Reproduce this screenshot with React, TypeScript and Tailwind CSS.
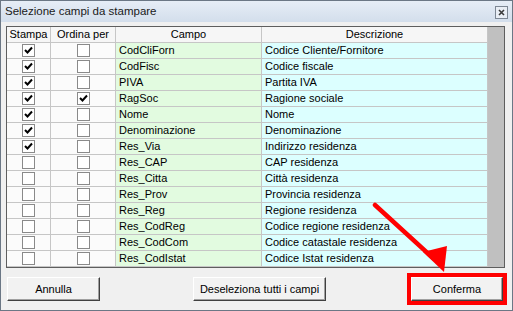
import { Fragment } from 'react';

type Row = { stampa: boolean; ordina: boolean; campo: string; descr: string };

const rows: Row[] = [
  { stampa: true, ordina: false, campo: 'CodCliForn', descr: 'Codice Cliente/Fornitore' },
  { stampa: true, ordina: false, campo: 'CodFisc', descr: 'Codice fiscale' },
  { stampa: true, ordina: false, campo: 'PIVA', descr: 'Partita IVA' },
  { stampa: true, ordina: true, campo: 'RagSoc', descr: 'Ragione sociale' },
  { stampa: true, ordina: false, campo: 'Nome', descr: 'Nome' },
  { stampa: true, ordina: false, campo: 'Denominazione', descr: 'Denominazione' },
  { stampa: true, ordina: false, campo: 'Res_Via', descr: 'Indirizzo residenza' },
  { stampa: false, ordina: false, campo: 'Res_CAP', descr: 'CAP residenza' },
  { stampa: false, ordina: false, campo: 'Res_Citta', descr: 'Città residenza' },
  { stampa: false, ordina: false, campo: 'Res_Prov', descr: 'Provincia residenza' },
  { stampa: false, ordina: false, campo: 'Res_Reg', descr: 'Regione residenza' },
  { stampa: false, ordina: false, campo: 'Res_CodReg', descr: 'Codice regione residenza' },
  { stampa: false, ordina: false, campo: 'Res_CodCom', descr: 'Codice catastale residenza' },
  { stampa: false, ordina: false, campo: 'Res_CodIstat', descr: 'Codice Istat residenza' },
];

const CheckBox = ({ checked }: { checked: boolean }) => (
  <div className="w-[13px] h-[13px] border border-[#8a8a8a] bg-white flex items-center justify-center">
    {checked && (
      <svg width="9" height="9" viewBox="0 0 9 9">
        <path d="M1 4 L3.5 6.5 L8 1.5" stroke="#000" strokeWidth="2" fill="none" />
      </svg>
    )}
  </div>
);

const WinButton = ({ label, className }: { label: string; className: string }) => (
  <button
    className={`h-[24px] bg-[#f2f2f2] border border-t-white border-l-white border-r-[#404040] border-b-[#404040] shadow-[inset_-1px_-1px_0_#a0a0a0] text-[11px] text-black ${className}`}
  >
    {label}
  </button>
);

export default function App() {
  const cellLine = 'border-r border-b border-[#c6c6c6]';
  return (
    <div
      className="relative w-[513px] h-[311px] border border-[#6b7785] bg-[#f0f0f0] flex flex-col overflow-hidden"
      style={{ fontFamily: '"Liberation Sans", Arial, sans-serif' }}
    >
      {/* title bar */}
      <div className="h-[21px] shrink-0 bg-gradient-to-b from-[#e6edf6] to-[#d3deec] flex items-center justify-between pl-[4px] pr-[4px]">
        <span className="text-[11.5px] text-[#1a1a1a]">Selezione campi da stampare</span>
        <svg width="13" height="13" viewBox="0 0 13 13" className="mt-[1px]">
          <rect x="0.5" y="0.5" width="12" height="12" fill="#e9eef5" stroke="#7d8794" />
          <path d="M4 4 L9 9 M9 4 L4 9" stroke="#3a3a3a" strokeWidth="1.6" />
        </svg>
      </div>

      {/* grid */}
      <div className="mt-[4px] ml-[5px] w-[499px] h-[242px] border border-[#5e5e5e] flex">
        <div className="grid grid-cols-[44px_65px_146px_226px] auto-rows-[16px] text-[11px] text-black">
          <div className={`${cellLine} bg-[#f6f6f6] flex items-center justify-center`}>Stampa</div>
          <div className={`${cellLine} bg-[#f6f6f6] flex items-center justify-center`}>Ordina per</div>
          <div className={`${cellLine} bg-[#f6f6f6] flex items-center justify-center`}>Campo</div>
          <div className={`${cellLine} bg-[#f6f6f6] flex items-center justify-center`}>Descrizione</div>
          {rows.map((r) => (
            <Fragment key={r.campo}>
              <div className={`${cellLine} bg-[#fbfbfb] flex items-center justify-center`}>
                <CheckBox checked={r.stampa} />
              </div>
              <div className={`${cellLine} bg-[#fbfbfb] flex items-center justify-center`}>
                <CheckBox checked={r.ordina} />
              </div>
              <div className={`${cellLine} bg-[#e2fbe0] flex items-center pl-[3px] whitespace-nowrap overflow-hidden`}>
                {r.campo}
              </div>
              <div className={`${cellLine} bg-[#dcffff] flex items-center pl-[3px] whitespace-nowrap overflow-hidden`}>
                {r.descr}
              </div>
            </Fragment>
          ))}
        </div>
        <div className="flex-1 bg-[#c0c0c0]" />
      </div>

      {/* buttons */}
      <div className="flex-1 flex items-center">
        <WinButton label="Annulla" className="ml-[6px] w-[93px]" />
        <WinButton label="Deseleziona tutti i campi" className="ml-[93px] w-[133px]" />
        <div className="ml-[81px] border-[4px] border-[#ff0000] flex">
          <WinButton label="Conferma" className="w-[92px]" />
        </div>
      </div>

      {/* red arrow annotation */}
      <svg className="absolute left-0 top-0 pointer-events-none" width="513" height="311" viewBox="0 0 513 311">
        <line x1="374" y1="204" x2="432" y2="257" stroke="#ff0000" strokeWidth="4.5" strokeLinecap="round" />
        <polygon points="422,251 446,245 443,271" fill="#ff0000" />
      </svg>
    </div>
  );
}
